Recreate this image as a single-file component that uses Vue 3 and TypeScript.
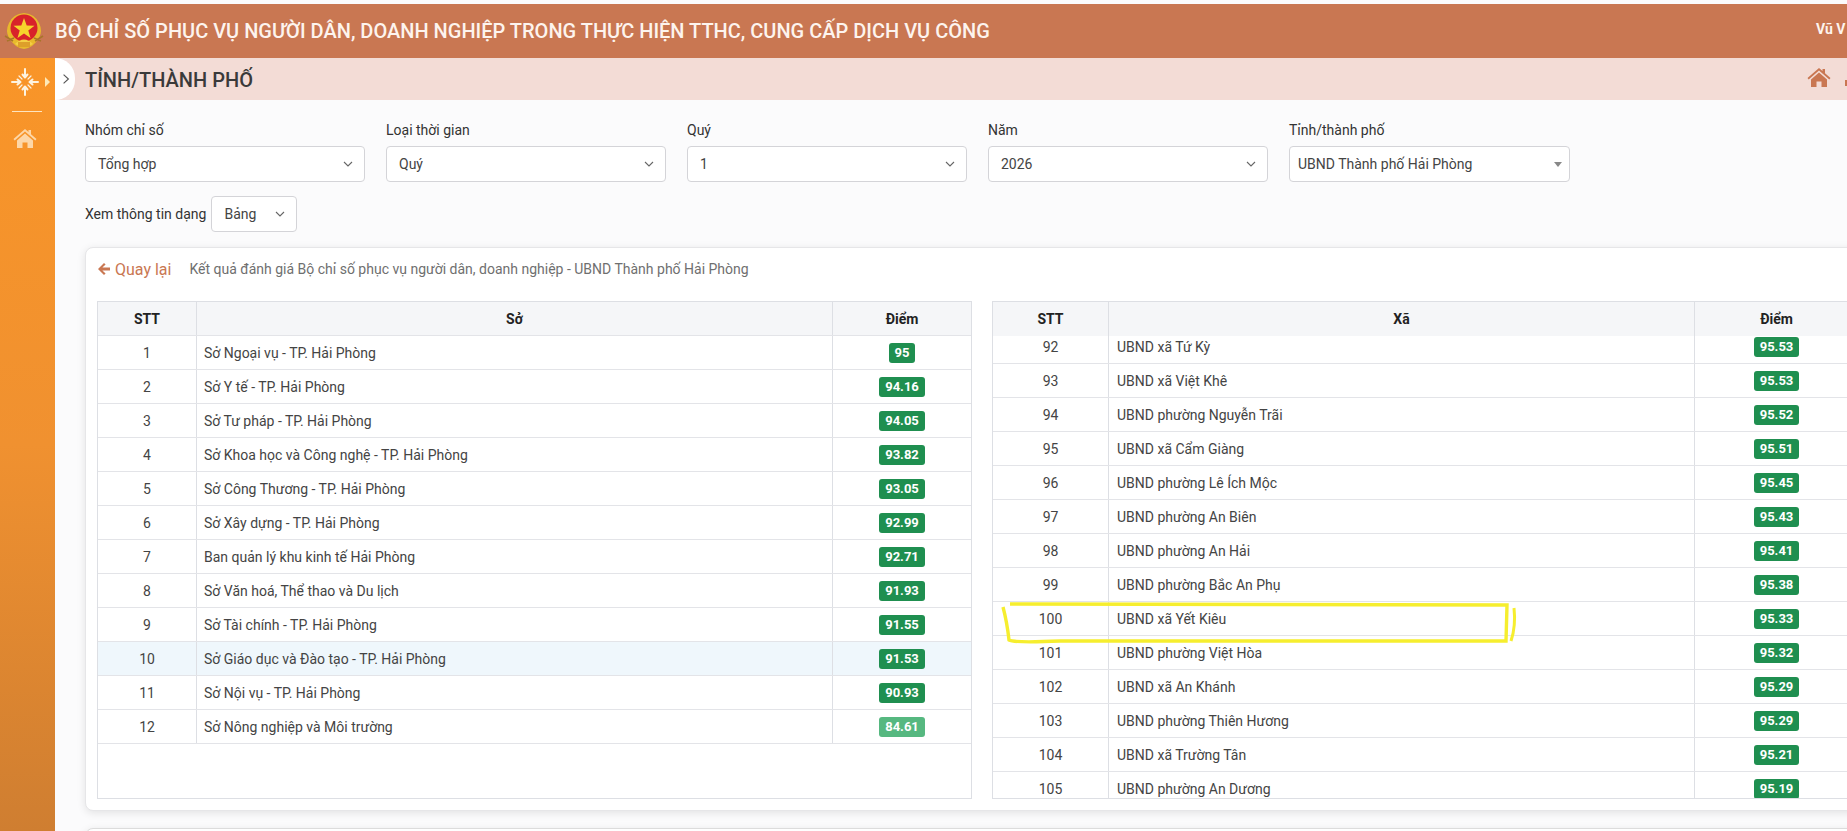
<script setup lang="ts">
interface Row { n: number; name: string; score: string; light?: boolean; hover?: boolean }
const filters = [
  { label: 'Nhóm chỉ số', value: 'Tổng hợp' },
  { label: 'Loại thời gian', value: 'Quý' },
  { label: 'Quý', value: '1' },
  { label: 'Năm', value: '2026' },
]
const leftRows: Row[] = [
  { n: 1, name: 'Sở Ngoại vụ - TP. Hải Phòng', score: '95' },
  { n: 2, name: 'Sở Y tế - TP. Hải Phòng', score: '94.16' },
  { n: 3, name: 'Sở Tư pháp - TP. Hải Phòng', score: '94.05' },
  { n: 4, name: 'Sở Khoa học và Công nghệ - TP. Hải Phòng', score: '93.82' },
  { n: 5, name: 'Sở Công Thương - TP. Hải Phòng', score: '93.05' },
  { n: 6, name: 'Sở Xây dựng - TP. Hải Phòng', score: '92.99' },
  { n: 7, name: 'Ban quản lý khu kinh tế Hải Phòng', score: '92.71' },
  { n: 8, name: 'Sở Văn hoá, Thể thao và Du lịch', score: '91.93' },
  { n: 9, name: 'Sở Tài chính - TP. Hải Phòng', score: '91.55' },
  { n: 10, name: 'Sở Giáo dục và Đào tạo - TP. Hải Phòng', score: '91.53', hover: true },
  { n: 11, name: 'Sở Nội vụ - TP. Hải Phòng', score: '90.93' },
  { n: 12, name: 'Sở Nông nghiệp và Môi trường', score: '84.61', light: true },
]
const rightRows: Row[] = [
  { n: 92, name: 'UBND xã Tứ Kỳ', score: '95.53' },
  { n: 93, name: 'UBND xã Việt Khê', score: '95.53' },
  { n: 94, name: 'UBND phường Nguyễn Trãi', score: '95.52' },
  { n: 95, name: 'UBND xã Cẩm Giàng', score: '95.51' },
  { n: 96, name: 'UBND phường Lê Ích Mộc', score: '95.45' },
  { n: 97, name: 'UBND phường An Biên', score: '95.43' },
  { n: 98, name: 'UBND phường An Hải', score: '95.41' },
  { n: 99, name: 'UBND phường Bắc An Phụ', score: '95.38' },
  { n: 100, name: 'UBND xã Yết Kiêu', score: '95.33' },
  { n: 101, name: 'UBND phường Việt Hòa', score: '95.32' },
  { n: 102, name: 'UBND xã An Khánh', score: '95.29' },
  { n: 103, name: 'UBND phường Thiên Hương', score: '95.29' },
  { n: 104, name: 'UBND xã Trường Tân', score: '95.21' },
  { n: 105, name: 'UBND phường An Dương', score: '95.19' },
]
const homePath = 'M12 2 L15.5 5 V3 H18 V7.2 L23.5 12 L22.3 13.4 L12 4.6 L1.7 13.4 L.5 12 Z M12 6.6 L20 13.4 V21 H14.5 V15.5 H9.5 V21 H4 V13.4 Z'
</script>

<template>
  <div class="page">
    <header class="top">
      <svg class="emblem" viewBox="0 0 40 40" aria-hidden="true">
        <path d="M5 27 Q1 20 5 12 Q9 3 20 2 Q31 3 35 12 Q39 20 35 27 Q29 37 20 38 Q11 37 5 27Z" fill="#e8b92c" />
        <path d="M1 25 L9 30 M39 25 L31 30 M3 30 L10 27 M37 30 L30 27" stroke="#a8752a" stroke-width="1.6" />
        <circle cx="20" cy="17" r="13.5" fill="#d8232a" />
        <path d="M20 7 L22.7 14.4 L30.5 14.7 L24.3 19.5 L26.5 27 L20 22.6 L13.5 27 L15.7 19.5 L9.5 14.7 L17.3 14.4Z" fill="#f6d42c" />
        <path d="M11 33 Q20 24 29 33 Q20 39 11 33Z" fill="#f4cf45" />
        <path d="M14 31 H26 V36 H14Z" fill="#dd9f2a" />
      </svg>
      <h1 class="title">BỘ CHỈ SỐ PHỤC VỤ NGƯỜI DÂN, DOANH NGHIỆP TRONG THỰC HIỆN TTHC, CUNG CẤP DỊCH VỤ CÔNG</h1>
      <span class="user">Vũ V</span>
    </header>

    <div class="body">
      <aside class="side">
        <div class="side-top">
          <svg class="compress" viewBox="0 0 28 28" aria-hidden="true">
            <g fill="none" stroke="#fdf3e0" stroke-width="2" stroke-linecap="round" stroke-linejoin="round">
              <path d="M14 1 V9 M11.5 6.5 L14 9.5 L16.5 6.5" />
              <path d="M14 27 V19 M11.5 21.5 L14 18.5 L16.5 21.5" />
              <path d="M1 14 H9 M6.5 11.5 L9.5 14 L6.5 16.5" />
              <path d="M27 14 H19 M21.5 11.5 L18.5 14 L21.5 16.5" />
              <path d="M11 11 L8 8 M17 11 L20 8 M11 17 L8 20 M17 17 L20 20" stroke-width="1.2" />
            </g>
          </svg>
          <span class="caret"></span>
        </div>
        <div class="side-line"></div>
        <svg class="side-home" viewBox="0 0 24 24" aria-hidden="true"><path :d="homePath" fill="#fdd7a8" /></svg>
      </aside>

      <main class="main">
        <div class="sub">
          <span class="toggle">
            <svg viewBox="0 0 10 14" aria-hidden="true"><path d="M2 1.5 L8 7 L2 12.5" fill="none" stroke="#555" stroke-width="1.4" /></svg>
          </span>
          <h2 class="sub-title">TỈNH/THÀNH PHỐ</h2>
          <div class="sub-icons">
            <svg class="sub-home" viewBox="0 0 24 24" aria-hidden="true"><path :d="homePath" fill="#c97752" /></svg>
            <span class="sub-dot"></span>
          </div>
        </div>

        <div class="content">
          <div class="filters">
            <div v-for="f in filters" :key="f.label" class="field">
              <label class="label">{{ f.label }}</label>
              <div class="select">
                <span>{{ f.value }}</span>
                <svg class="chev" viewBox="0 0 10 6" aria-hidden="true"><path d="M1 1 L5 5 L9 1" fill="none" stroke="#666" stroke-width="1.1" /></svg>
              </div>
            </div>
            <div class="field">
              <label class="label">Tỉnh/thành phố</label>
              <div class="select select-alt">
                <span>UBND Thành phố Hải Phòng</span>
                <span class="tri"></span>
              </div>
            </div>
          </div>

          <div class="view-row">
            <span class="label inline">Xem thông tin dạng</span>
            <div class="select small">
              <span>Bảng</span>
              <svg class="chev" viewBox="0 0 10 6" aria-hidden="true"><path d="M1 1 L5 5 L9 1" fill="none" stroke="#666" stroke-width="1.1" /></svg>
            </div>
          </div>

          <section class="card">
            <div class="card-head">
              <a class="back">
                <svg class="back-arrow" viewBox="0 0 14 14" aria-hidden="true"><path d="M7 1 L1 7 L7 13 L8.6 11.4 L5.4 8.4 H13 V5.6 H5.4 L8.6 2.6Z" fill="#c97752" /></svg>
                Quay lại
              </a>
              <span class="card-title">Kết quả đánh giá Bộ chỉ số phục vụ người dân, doanh nghiệp - UBND Thành phố Hải Phòng</span>
            </div>

            <div class="tables">
              <div class="tbl tbl-left">
                <div class="row head">
                  <div class="c">STT</div><div class="c">Sở</div><div class="c last">Điểm</div>
                </div>
                <div v-for="r in leftRows" :key="r.n" class="row" :class="{ hover: r.hover }">
                  <div class="c">{{ r.n }}</div>
                  <div class="c name">{{ r.name }}</div>
                  <div class="c last"><span class="badge" :class="{ light: r.light }">{{ r.score }}</span></div>
                </div>
              </div>

              <div class="tbl tbl-right">
                <div class="row head">
                  <div class="c">STT</div><div class="c">Xã</div><div class="c last">Điểm</div>
                </div>
                <div class="scroller">
                  <div class="scroll-inner">
                    <div v-for="r in rightRows" :key="r.n" class="row">
                      <div class="c">{{ r.n }}</div>
                      <div class="c name">{{ r.name }}</div>
                      <div class="c last"><span class="badge">{{ r.score }}</span></div>
                    </div>
                  </div>
                </div>
                <svg class="mark" viewBox="0 0 520 44" aria-hidden="true">
                  <path d="M3 5 Q7 20 9 38 Q14 41 60 39 L506 39 L507 3 L10 2" fill="none" stroke="#f6ee2e" stroke-width="3.4" />
                  <path d="M514 6 Q516 24 511 39" fill="none" stroke="#f6ee2e" stroke-width="3" />
                </svg>
              </div>
            </div>
          </section>

          <section class="card next"></section>
        </div>
      </main>
    </div>
  </div>
</template>

<style>
html, body { margin: 0; overflow: hidden; background: #fbfbfc; }
</style>

<style scoped>
* { box-sizing: border-box; }
.page {
  width: 1847px; height: 831px; overflow: hidden; display: flex; flex-direction: column;
  font-family: Roboto, "Noto Sans", sans-serif; font-size: 14px; color: #444;
  background: #fbfbfc; padding-top: 4px;
}
.top {
  height: 54px; flex: none; background: #c97752; display: flex; align-items: center;
  position: relative; color: #fdf4ee; padding-left: 4px;
}
.emblem { width: 40px; height: 40px; flex: none; }
.title { margin: 0 0 0 11px; font-size: 20px; font-weight: 500; white-space: nowrap; }
.user { position: absolute; left: 1816px; top: 17px; font-size: 14px; font-weight: 700; white-space: nowrap; }
.body { flex: 1; display: flex; min-height: 0; }
.side {
  width: 55px; flex: none; display: flex; flex-direction: column; align-items: center;
  background: linear-gradient(180deg, #f99528 0%, #f09130 50%, #cf7e31 100%);
}
.side-top { height: 42px; width: 100%; display: flex; align-items: center; position: relative; justify-content: center; padding: 6px 6px 0 0; }
.compress { width: 28px; height: 28px; }
.caret {
  position: absolute; right: 5px; top: 19px; width: 0; height: 0;
  border-left: 5px solid #fde9b8; border-top: 5px solid transparent; border-bottom: 5px solid transparent;
}
.side-line { width: 30px; height: 1px; background: #fde4c0; margin-top: 11px; margin-left: -2px; }
.side-home { width: 24px; height: 24px; margin-top: 15px; margin-left: -5px; }
.main { flex: 1; min-width: 0; }
.sub {
  height: 42px; background: #f3dcd6; display: flex; align-items: center; position: relative;
  padding-left: 30px;
}
.toggle {
  position: absolute; left: 0; top: 0; width: 20px; height: 42px; background: #fff;
  border-radius: 0 21px 21px 0; display: flex; align-items: center; justify-content: flex-start; padding-left: 7px;
}
.toggle svg { width: 8px; height: 12px; }
.sub-title { margin: 1px 0 0; font-size: 20px; font-weight: 500; color: #3a3a3a; }
.sub-icons { position: absolute; left: 1752px; top: 0; display: flex; align-items: center; height: 42px; }
.sub-home { width: 24px; height: 24px; margin-top: -2px; }
.sub-dot { width: 5px; height: 6px; background: #c97752; margin-left: 14px; margin-top: 8px; }
.content { padding: 20px 0 0 30px; width: 1900px; }
.filters { display: grid; grid-template-columns: repeat(4, 280px) 281px; column-gap: 21px; }
.field { display: flex; flex-direction: column; }
.label { font-size: 14px; color: #333; line-height: 20px; margin-bottom: 6px; }
.label.inline { margin: 0 4px 0 0; }
.select {
  height: 36px; background: #fff; border: 1px solid #d4d4d8; border-radius: 4px; color: #444;
  display: flex; align-items: center; justify-content: space-between; padding: 0 11px 0 12px; font-size: 14px;
}
.select-alt { padding: 0 7px 0 8px; }
.chev { width: 10px; height: 6px; }
.tri { width: 0; height: 0; border-top: 5px solid #888; border-left: 4px solid transparent; border-right: 4px solid transparent; }
.view-row { display: flex; align-items: center; margin-top: 14px; }
.small { width: 86px; margin-left: 1px; padding: 0 11px 0 12px; }
.card {
  margin-top: 15px; background: #fff; border: 1px solid #e6e6e8; border-radius: 8px; height: 564px;
  box-shadow: 0 2px 8px rgba(0,0,0,.1); padding: 0 11px;
}
.card.next { margin-top: 17px; height: 60px; border-color: #dcdcdc; }
.card-head { height: 53px; display: flex; align-items: center; padding-bottom: 11px; }
.back { color: #c97752; font-size: 16px; display: flex; align-items: center; gap: 4px; }
.back-arrow { width: 14px; height: 14px; }
.card-title { margin-left: 18px; color: #6f6f6f; font-size: 14px; }
.tables { display: flex; gap: 20px; }
.tbl { height: 498px; border: 1px solid #dddfe4; position: relative; }
.tbl-left { width: 875px; }
.tbl-right { width: 867px; }
.tbl-left .row { grid-template-columns: 99px 636px 1fr; }
.tbl-right .row { grid-template-columns: 116px 586px 1fr; }
.row { display: grid; height: 34px; border-bottom: 1px solid #e3e4e8; }
.row.hover { background: #eff7fc; }
.row.head { background: #f5f6f8; font-weight: 700; color: #222; }
.tbl-right .row.head { border-bottom: 0; position: relative; z-index: 1; }
.c {
  display: flex; align-items: center; justify-content: center; border-right: 1px solid #dddfe4; white-space: nowrap; min-width: 0;
}
.c.last { border-right: 0; }
.c.name { justify-content: flex-start; padding-left: 7px; }
.tbl-right .c.name { padding-left: 8px; }
.badge {
  display: inline-block; background: #1f8f50; color: #fff; font-size: 13px; font-weight: 700; line-height: 20px; height: 20px;
  padding: 0 6px; border-radius: 3px;
}
.badge.light { background: #56b880; }
.scroller { height: 462px; overflow: hidden; }
.scroll-inner { margin-top: -6px; }
.mark { position: absolute; left: 7px; top: 300px; width: 520px; height: 44px; overflow: visible; }
</style>
